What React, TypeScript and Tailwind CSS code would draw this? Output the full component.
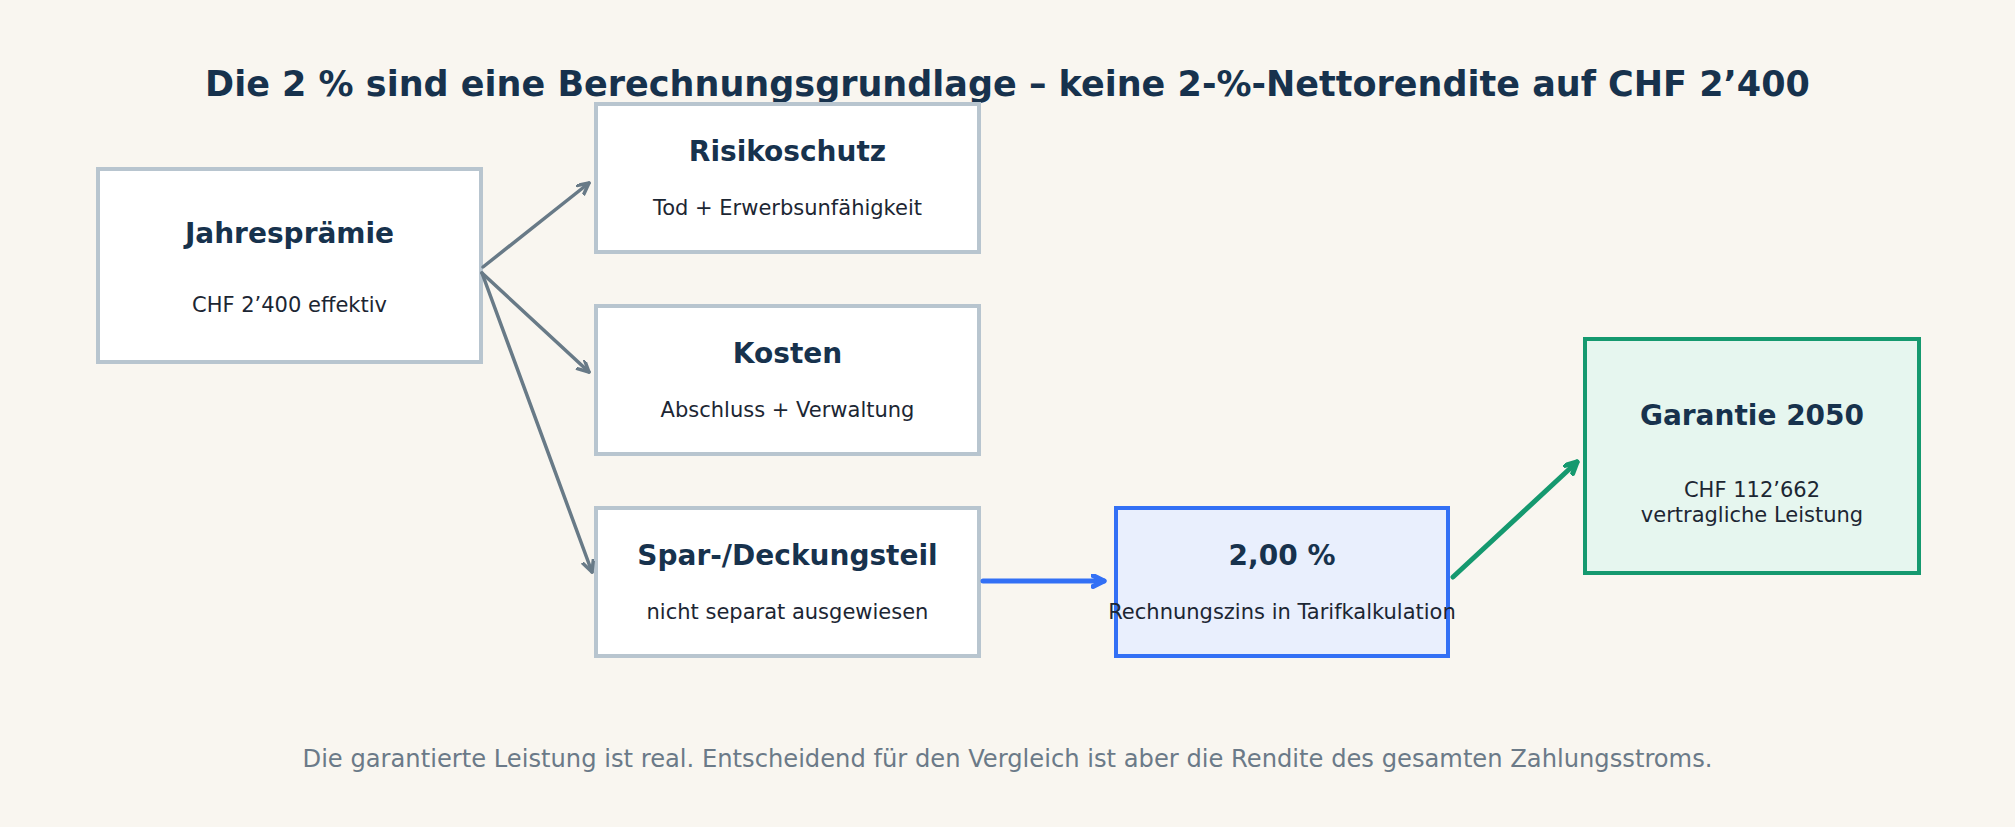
import React from 'react';

type NodeProps = {
  title: string;
  lines: string[];
  className: string;
  pad: string;
  gap: string;
  lead?: string;
};

// one box of the diagram
const Node = ({ title, lines, className, pad, gap, lead = 'leading-[26px]' }: NodeProps) => (
  <div className={`absolute flex flex-col items-center border-4 ${pad} ${className}`}>
    <div className="text-[28px] font-bold leading-[34px] text-[#17324d] whitespace-nowrap">{title}</div>
    <div className={`${gap} flex flex-col items-center`}>
      {lines.map((l) => (
        <div key={l} className={`text-[21px] ${lead} text-[#1c2633] whitespace-nowrap`}>
          {l}
        </div>
      ))}
    </div>
  </div>
);

const Arrows = () => (
  <svg className="absolute inset-0 overflow-visible" width="2015" height="640" viewBox="0 0 2015 640">
    <defs>
      <marker id="hg" markerUnits="userSpaceOnUse" markerWidth="16" markerHeight="16" refX="12" refY="6" orient="auto">
        <path d="M1,0.5 L12,6 L1,11.5" fill="none" stroke="#687a87" strokeWidth="3.5" strokeLinecap="round" strokeLinejoin="round" />
      </marker>
      <marker id="hb" markerUnits="userSpaceOnUse" markerWidth="18" markerHeight="18" refX="13" refY="7" orient="auto">
        <path d="M2,1.5 L13,7 L2,12.5" fill="none" stroke="#3370f5" strokeWidth="5" strokeLinecap="round" strokeLinejoin="round" />
      </marker>
      <marker id="hgr" markerUnits="userSpaceOnUse" markerWidth="18" markerHeight="18" refX="13" refY="7" orient="auto">
        <path d="M2,1.5 L13,7 L2,12.5" fill="none" stroke="#15996f" strokeWidth="5" strokeLinecap="round" strokeLinejoin="round" />
      </marker>
    </defs>
    <g stroke="#687a87" strokeWidth="3.5" strokeLinecap="round" fill="none">
      <line x1="483" y1="163" x2="589" y2="79" markerEnd="url(#hg)" />
      <line x1="482" y1="169" x2="589" y2="268" markerEnd="url(#hg)" />
      <line x1="482" y1="169" x2="592" y2="468" markerEnd="url(#hg)" />
    </g>
    <line x1="983" y1="477" x2="1104" y2="477" stroke="#3370f5" strokeWidth="5" strokeLinecap="round" markerEnd="url(#hb)" />
    <line x1="1453" y1="473" x2="1577" y2="358" stroke="#15996f" strokeWidth="5" strokeLinecap="round" markerEnd="url(#hgr)" />
  </svg>
);

export default function App() {
  return (
    <div className="w-[2015px] h-[827px] bg-[#f9f6f0] flex flex-col" style={{ fontFamily: '"DejaVu Sans", Verdana, sans-serif' }}>
      <h1 className="h-[104px] pt-[63px] text-center text-[35px] font-bold leading-[42px] text-[#17324d]">
        Die 2 % sind eine Berechnungsgrundlage – keine 2-%-Nettorendite auf CHF 2’400
      </h1>

      <div className="relative h-[640px]">
        <Node
          title="Jahresprämie"
          lines={['CHF 2’400 effektiv']}
          className="left-[96px] top-[63px] w-[387px] h-[197px] bg-white border-[#b8c5cf]"
          pad="pt-[46px]"
          gap="mt-[41px]"
        />
        <Node
          title="Risikoschutz"
          lines={['Tod + Erwerbsunfähigkeit']}
          className="left-[594px] top-[-2px] w-[387px] h-[152px] bg-white border-[#b8c5cf]"
          pad="pt-[29px]"
          gap="mt-[26px]"
        />
        <Node
          title="Kosten"
          lines={['Abschluss + Verwaltung']}
          className="left-[594px] top-[200px] w-[387px] h-[152px] bg-white border-[#b8c5cf]"
          pad="pt-[29px]"
          gap="mt-[26px]"
        />
        <Node
          title="Spar-/Deckungsteil"
          lines={['nicht separat ausgewiesen']}
          className="left-[594px] top-[402px] w-[387px] h-[152px] bg-white border-[#b8c5cf]"
          pad="pt-[29px]"
          gap="mt-[26px]"
        />
        <Node
          title="2,00 %"
          lines={['Rechnungszins in Tarifkalkulation']}
          className="left-[1114px] top-[402px] w-[336px] h-[152px] bg-[#e9effd] border-[#3370f5]"
          pad="pt-[29px]"
          gap="mt-[26px]"
        />
        <Node
          title="Garantie 2050"
          lines={['CHF 112’662', 'vertragliche Leistung']}
          className="left-[1583px] top-[233px] w-[338px] h-[238px] bg-[#e6f6ef] border-[#15996f]"
          pad="pt-[58px]"
          gap="mt-[45px]"
          lead="leading-[25px]"
        />
        <Arrows />
      </div>

      <p className="pt-[1px] text-center text-[24.2px] leading-[28px] text-[#6b7a88]">
        Die garantierte Leistung ist real. Entscheidend für den Vergleich ist aber die Rendite des gesamten Zahlungsstroms.
      </p>
    </div>
  );
}
